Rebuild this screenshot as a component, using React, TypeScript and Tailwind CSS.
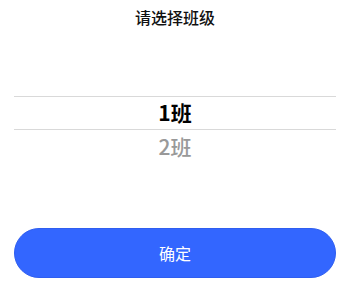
const classes = ['1班', '2班']

export default function App() {
  const selected = 0

  return (
    <div
      className="w-full h-[287px] bg-white flex flex-col"
      style={{fontFamily: '"Noto Sans CJK SC", "Noto Sans", sans-serif'}}
    >
      <div className="h-[34px] flex items-center justify-center text-[16px] font-medium text-[#111]">
        请选择班级
      </div>

      <div className="h-[62px]" />

      <div className="flex flex-col">
        {classes.map((name, i) => (
          <div
            key={name}
            className={`h-[34px] mx-[14px] flex items-center justify-center text-[21px] ${
              i === selected
                ? 'border-y border-[#d9d9d9] font-bold text-black'
                : 'font-medium text-[#999]'
            }`}
          >
            {name}
          </div>
        ))}
      </div>

      <div className="flex-1" />

      <div className="px-[14px] pb-[9px]">
        <button className="w-full h-[50px] rounded-full bg-[#3366ff] border border-[#2f5ef0] text-white text-[16px] flex items-center justify-center">
          确定
        </button>
      </div>
    </div>
  )
}
